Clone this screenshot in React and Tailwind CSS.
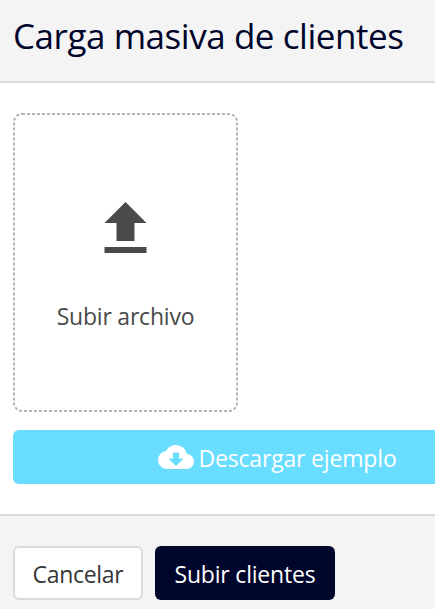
import { MdCloudDownload } from "react-icons/md";

function UploadIcon() {
    return (
        <svg viewBox="-0.17 0 24 24" className="mr-px h-[72px] w-[72px] fill-[#4a4a4a]">
            <path d="M9 16h6v-6h4l-7-7-7 7h4zM5 18h14v2H5z" />
        </svg>
    );
}

// Finer dashes than border-dashed gives
function DashedOutline() {
    return (
        <svg className="pointer-events-none absolute inset-0 h-full w-full" fill="none" aria-hidden="true">
            <rect x="1" y="1" width="223" height="297" rx="8" stroke="#b5b5b5" strokeWidth="2" strokeDasharray="3 2" />
        </svg>
    );
}

export default function App() {
    return (
        <main className="flex h-[609px] w-full flex-col overflow-hidden bg-white font-['Open_Sans',sans-serif] whitespace-nowrap">
            <header className="h-[83px] shrink-0 border-b-2 border-[#dbdbdb] bg-[#f4f4f4] pt-3 pl-[13px]">
                <h1 className="text-[35px] leading-[48px] tracking-[-0.45px] text-[#00052b]">
                    Carga masiva de clientes
                </h1>
            </header>

            <section className="h-[431px] shrink-0 pt-[30px] pl-[13px]">
                <button className="relative flex h-[299px] w-[225px] flex-col items-center rounded-lg pt-20 text-[#4a4a4a]">
                    <DashedOutline />
                    <UploadIcon />
                    <span className="mt-[33px] text-[23px] leading-9 tracking-[-0.22px]">Subir archivo</span>
                </button>
                <button className="mt-[18px] flex h-[54px] w-[529px] items-center justify-center gap-1 rounded-md bg-[#69ddff] text-white">
                    <MdCloudDownload className="size-9" />
                    <span className="pt-0.5 text-[23px] leading-9 tracking-[-0.17px]">Descargar ejemplo</span>
                </button>
            </section>

            <footer className="flex flex-1 gap-3 border-t-2 border-[#dbdbdb] bg-[#f4f4f4] pt-[30px] pl-[13px]">
                <button className="flex h-[54px] w-[130px] items-center justify-center rounded-md border-2 border-[#dbdbdb] bg-white text-[23px] tracking-[-0.3px] text-[#363636]">
                    <span className="pt-0.5">Cancelar</span>
                </button>
                <button className="flex h-[54px] w-[180px] items-center justify-center rounded-md bg-[#00052b] text-[23px] tracking-[-0.2px] text-white">
                    <span className="pt-0.5">Subir clientes</span>
                </button>
            </footer>
        </main>
    );
}
